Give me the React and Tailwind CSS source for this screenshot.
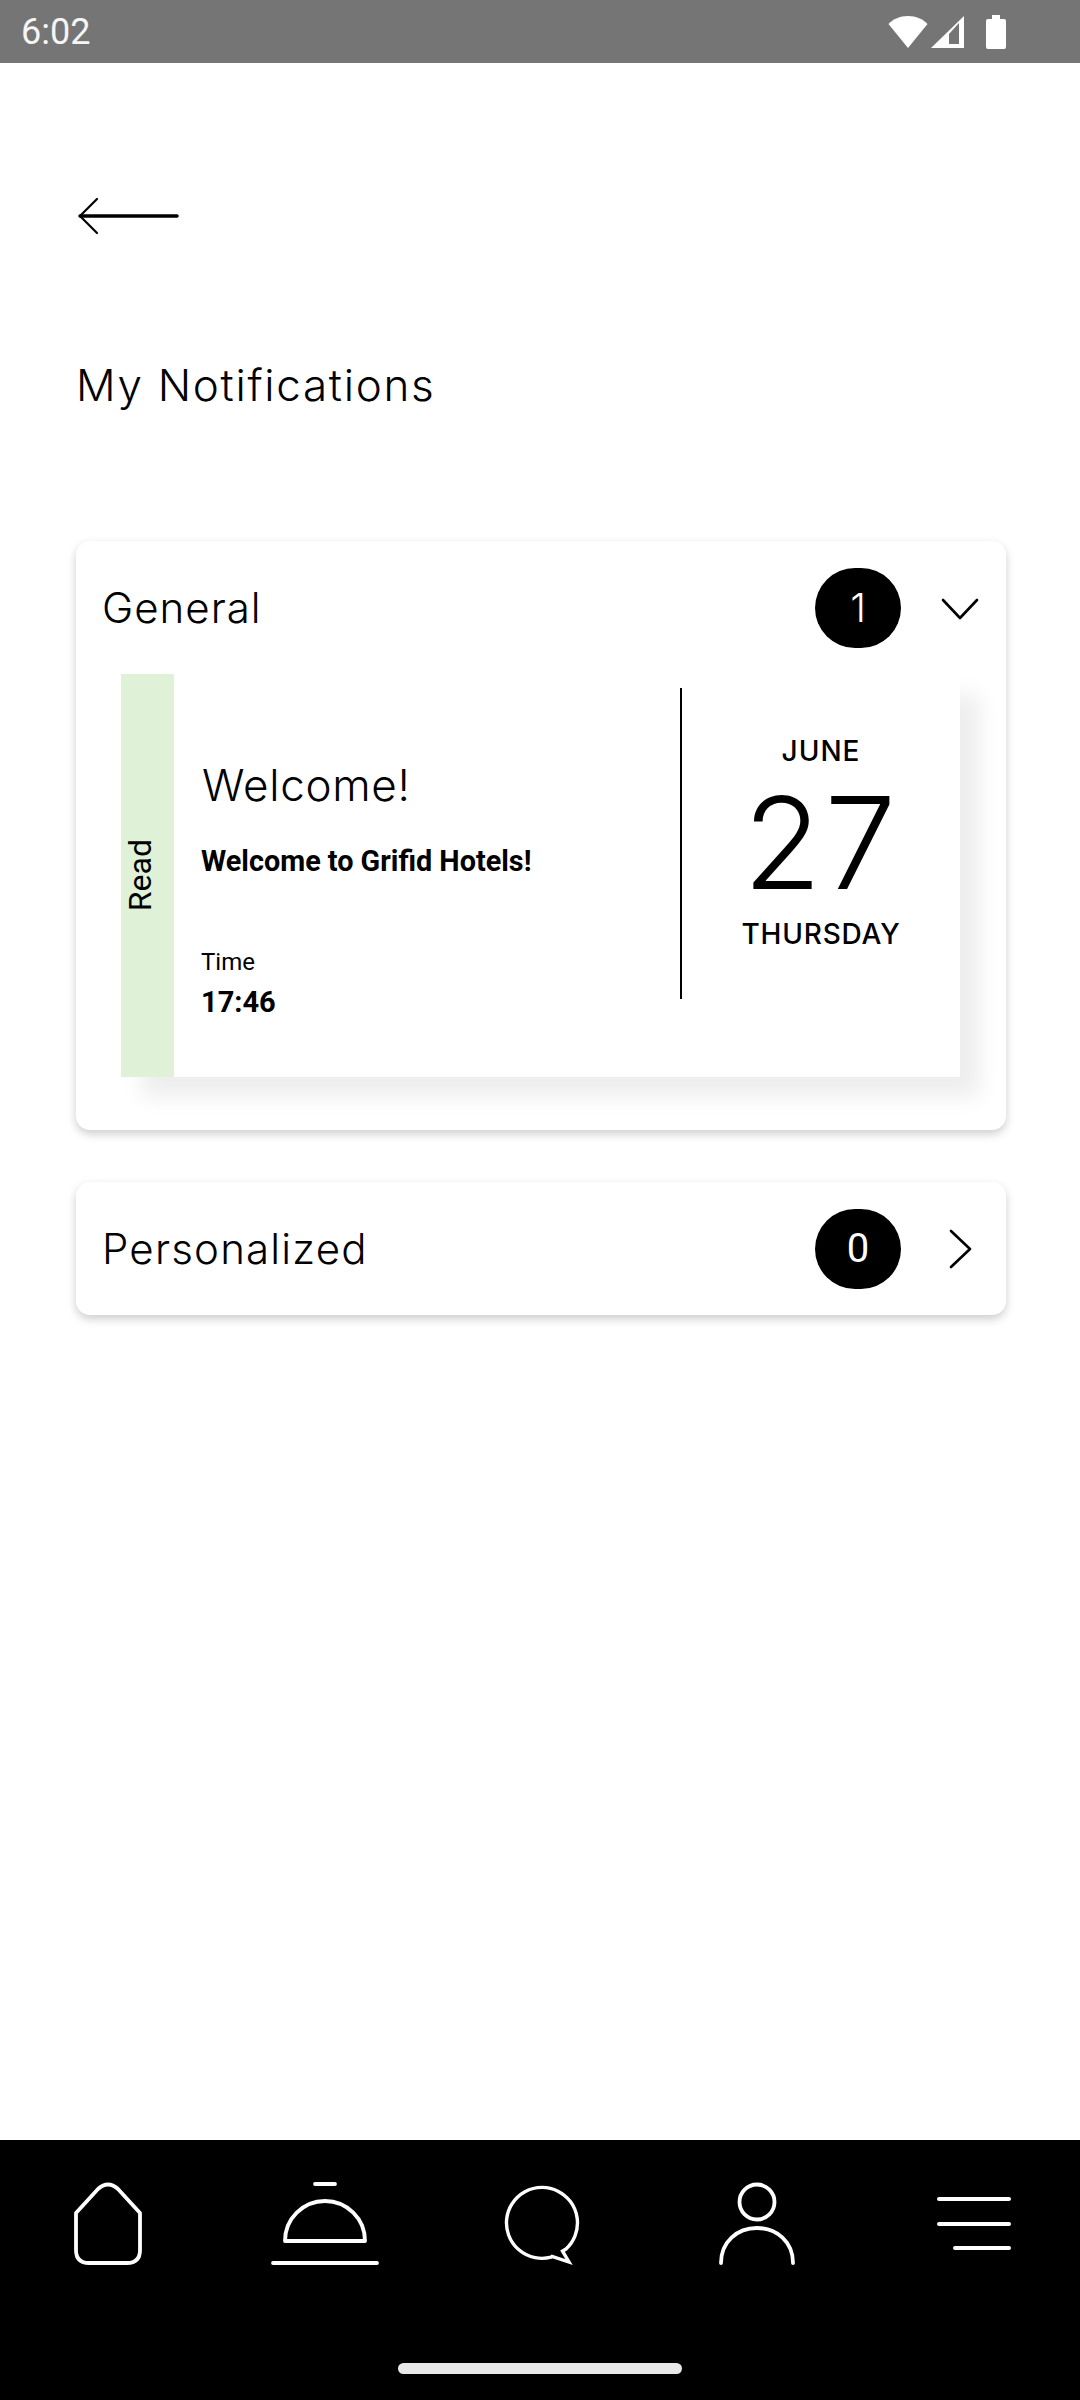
const ROBOTO = "font-['Roboto',sans-serif]";
const HEADING = "font-['Inter',sans-serif] font-light";

function NavIcon({ children }) {
  return (
    <svg width="120" height="90" viewBox="0 0 120 90" fill="none" stroke="white" strokeWidth="3.8" strokeLinecap="round" strokeLinejoin="round">
      {children}
    </svg>
  );
}

function CountBadge({ value, light }) {
  return (
    <div className={`w-[86px] h-[80px] rounded-full bg-black text-white flex items-center justify-center text-[40px] leading-none ${light ? HEADING : ROBOTO}`}>
      {value}
    </div>
  );
}

function Chevron({ d }) {
  return (
    <svg width="44" height="44" viewBox="0 0 44 44" fill="none" stroke="black" strokeWidth="2.6" strokeLinecap="round" strokeLinejoin="round" className="ml-[37px]">
      <path d={d} />
    </svg>
  );
}

function StatusBar() {
  return (
    <div className="h-[63px] bg-[#757575] flex items-center justify-between pl-[21px] pr-[74px]">
      <span className={`${ROBOTO} text-[36px] leading-none text-[#f5f5f5]`}>6:02</span>
      <div className="flex items-center gap-[3px]">
        <svg width="40" height="34" viewBox="0 0 40 34" fill="white">
          <path d="M20 33 L0.5 9 C5 4 12 1 20 1 C28 1 35 4 39.5 9 Z" />
        </svg>
        <svg width="34" height="34" viewBox="0 0 34 34" fill="white" className="mr-[18px]">
          <path fillRule="evenodd" d="M33 1 V33 H0 Z M28 8 L18 19 V29 H28 Z" />
        </svg>
        <svg width="20" height="34" viewBox="0 0 20 34" fill="white">
          <path d="M6 0 H14 V4 H18 Q20 4 20 6 V32 Q20 34 18 34 H2 Q0 34 0 32 V6 Q0 4 2 4 H6 Z" />
        </svg>
      </div>
    </div>
  );
}

function NotificationCard() {
  return (
    <div className="ml-[45px] mr-[46px] h-[403px] flex bg-white shadow-[20px_20px_20px_rgba(0,0,0,0.07)]">
      <div className="w-[53px] bg-[#dff2d8] flex items-center justify-center pr-[16px]">
        <span className={`${ROBOTO} text-[32px] leading-none text-black [writing-mode:vertical-rl] rotate-180`}>Read</span>
      </div>
      <div className="flex-1 flex flex-col pl-[28px] pt-[86px]">
        <span className={`${HEADING} text-[44px] leading-[50px] tracking-[0.7px] text-black`}>Welcome!</span>
        <span className={`${ROBOTO} font-bold text-[28.8px] leading-[34px] -ml-[1px] text-black mt-[34px]`}>Welcome to Grifid Hotels!</span>
        <span className={`${ROBOTO} text-[24px] leading-[28px] -ml-[1px] text-black mt-[70px]`}>Time</span>
        <span className={`${ROBOTO} font-bold text-[29px] leading-[34px] -ml-[1px] text-black mt-[9px]`}>17:46</span>
      </div>
      <div className="w-[280px] mt-[14px] mb-[78px] border-l-2 border-black flex flex-col items-center">
        <span className={`${HEADING} font-medium text-[28px] leading-[32px] tracking-[1px] text-black mt-[47px]`}>JUNE</span>
        <span className={`${HEADING} text-[128px] leading-[120px] tracking-[3px] text-black mt-[16px]`}>27</span>
        <span className={`${HEADING} font-medium text-[28px] leading-[32px] tracking-[0.8px] text-black mt-[15px]`}>THURSDAY</span>
      </div>
    </div>
  );
}

export default function App() {
  return (
    <div className="w-[1080px] h-[2400px] bg-white flex flex-col overflow-hidden">
      <StatusBar />

      <div className="flex-1 flex flex-col pl-[76px] pr-[74px]">
        <svg width="104" height="38" viewBox="0 0 104 38" fill="none" stroke="black" strokeLinecap="round" className="mt-[134px]">
          <path d="M4 19 H101" strokeWidth="3.5" />
          <path d="M21 2 L4 19 L21 36" strokeWidth="2.2" strokeLinejoin="round" />
        </svg>

        <h1 className={`${HEADING} text-[44px] leading-[54px] tracking-[1.7px] text-black mt-[123px]`}>My Notifications</h1>

        <div className="mt-[129px] h-[589px] rounded-[14px] bg-white shadow-[0_4px_10px_rgba(0,0,0,0.2)]">
          <div className="h-[133px] flex items-center pl-[26px] pr-[24px]">
            <span className={`${HEADING} text-[42px] leading-none tracking-[1px] text-black flex-1`}>General</span>
            <CountBadge value="1" light />
            <Chevron d="M5 14 L22 32 L39 14" />
          </div>
          <NotificationCard />
        </div>

        <div className="mt-[52px] h-[133px] rounded-[14px] bg-white shadow-[0_4px_10px_rgba(0,0,0,0.2)] flex items-center pl-[26px] pr-[24px]">
          <span className={`${HEADING} text-[42px] leading-none tracking-[1.2px] text-black flex-1`}>Personalized</span>
          <CountBadge value="0" />
          <Chevron d="M13 4 L32 22 L13 40" />
        </div>
      </div>

      <div className="h-[260px] bg-black flex flex-col">
        <div className="grid grid-cols-5 justify-items-center pt-[40px]">
          <NavIcon>
            <path d="M28 33 L50 9 Q60 0 70 9 L92 33 V70 Q92 83 79 83 H41 Q28 83 28 70 Z" />
          </NavIcon>
          <NavIcon>
            <path d="M51 4 H71" />
            <path d="M21 61 A40 40 0 0 1 101 61 Z" />
            <path d="M9 83 H113" />
          </NavIcon>
          <NavIcon>
            <path strokeWidth="3.4" strokeLinejoin="miter" d="M71 77.2 A35.5 35.5 0 1 1 86 69 L82.5 71 L89 82 L72 76.5 Z" />
          </NavIcon>
          <NavIcon>
            <circle cx="61" cy="22" r="17.5" />
            <path d="M25 83 C25 62 41 48 61 48 C81 48 97 62 97 83" />
          </NavIcon>
          <NavIcon>
            <path d="M27 19 H97" strokeWidth="4" />
            <path d="M27 44 H97" strokeWidth="4" />
            <path d="M43 68 H97" strokeWidth="4" />
          </NavIcon>
        </div>
        <div className="mt-[93px] mx-auto w-[284px] h-[11px] rounded-full bg-[#e8e8e8]" />
      </div>
    </div>
  );
}
